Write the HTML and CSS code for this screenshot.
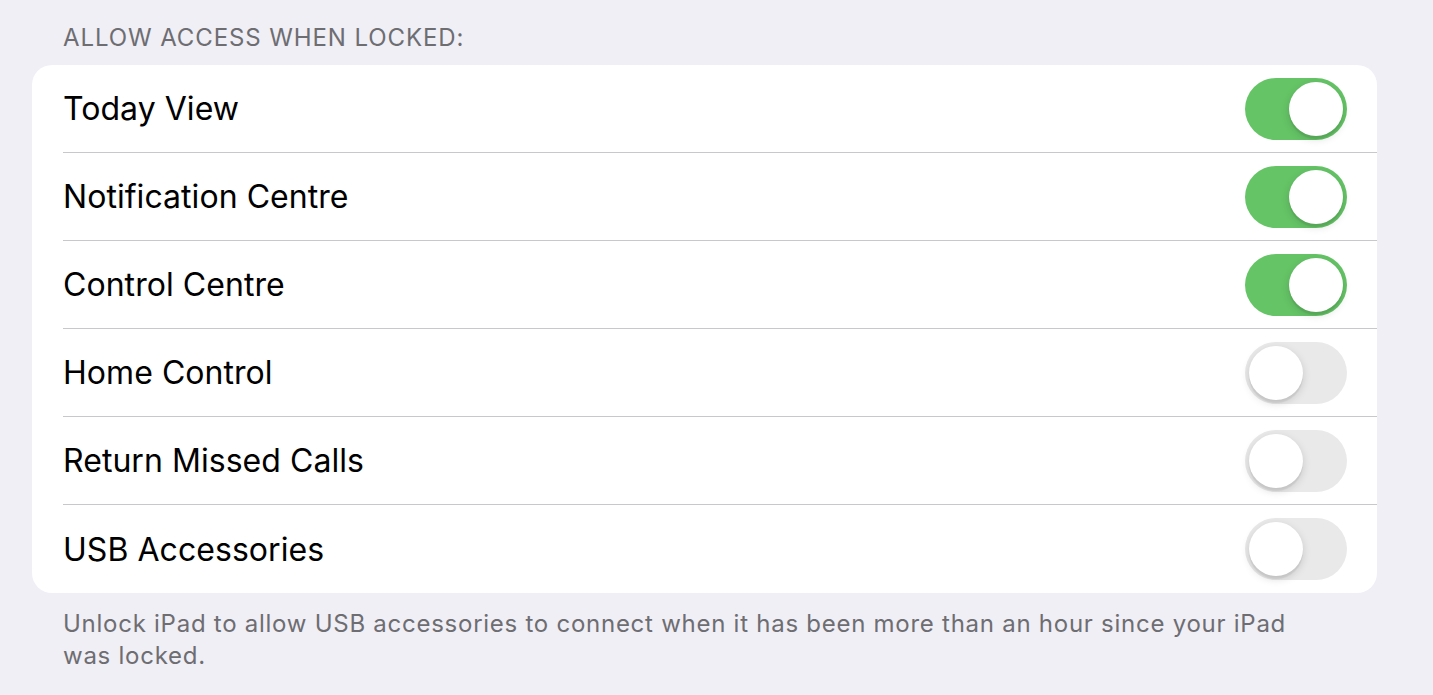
FILE: index.html
```html
<!DOCTYPE html>
<html lang="en">
<head>
<meta charset="utf-8">
<title>Allow Access When Locked</title>
<link rel="stylesheet" href="styles.css">
</head>
<body>
<main class="page">
  <h2 class="section-header">ALLOW ACCESS WHEN LOCKED:</h2>
  <div class="card">
    <div class="row"><span class="label">Today View</span><span class="toggle on"><span class="knob"></span></span></div>
    <div class="row"><span class="label">Notification Centre</span><span class="toggle on"><span class="knob"></span></span></div>
    <div class="row"><span class="label">Control Centre</span><span class="toggle on"><span class="knob"></span></span></div>
    <div class="row"><span class="label">Home Control</span><span class="toggle"><span class="knob"></span></span></div>
    <div class="row"><span class="label">Return Missed Calls</span><span class="toggle"><span class="knob"></span></span></div>
    <div class="row"><span class="label">USB Accessories</span><span class="toggle"><span class="knob"></span></span></div>
  </div>
  <p class="footer">Unlock iPad to allow USB accessories to connect when it has been more than an hour since your iPad was locked.</p>
</main>
</body>
</html>
```
FILE: styles.css
```css
html, body {
  margin: 0;
  padding: 0;
  background: #f0eff5;
}
body {
  font-family: Inter, "Liberation Sans", Arial, sans-serif;
  -webkit-font-smoothing: antialiased;
}
.page {
  padding: 0 56px 0 32px;
}
.section-header {
  margin: 0;
  padding: 24px 0 14px 31px;
  font-size: 24px;
  font-weight: 400;
  line-height: 27px;
  color: #6d6d72;
  letter-spacing: 0.9px;
}
.card {
  background: #ffffff;
  border-radius: 20px;
  overflow: hidden;
}
.row {
  display: flex;
  align-items: center;
  justify-content: space-between;
  height: 88px;
  margin-left: 31px;
  padding-right: 30px;
  border-bottom: 1px solid #c8c7cc;
  box-sizing: border-box;
}
.row:last-child {
  border-bottom: none;
}
.label {
  font-size: 32px;
  color: #000;
  letter-spacing: 0.05px;
}
.toggle {
  position: relative;
  width: 102px;
  height: 62px;
  border-radius: 31px;
  background: #e9e9ea;
  flex: none;
}
.toggle.on {
  background: #65c466;
}
.knob {
  position: absolute;
  top: 4px;
  left: 4px;
  width: 54px;
  height: 54px;
  border-radius: 50%;
  background: #fff;
  box-shadow: 0 3px 8px rgba(0, 0, 0, 0.15), 0 3px 1px rgba(0, 0, 0, 0.06);
}
.toggle.on .knob {
  left: 44px;
}
.footer {
  margin: 0;
  padding: 15px 0 0 31px;
  max-width: 1240px;
  font-size: 24px;
  line-height: 32px;
  color: #6d6d72;
  letter-spacing: 0.74px;
}
```
